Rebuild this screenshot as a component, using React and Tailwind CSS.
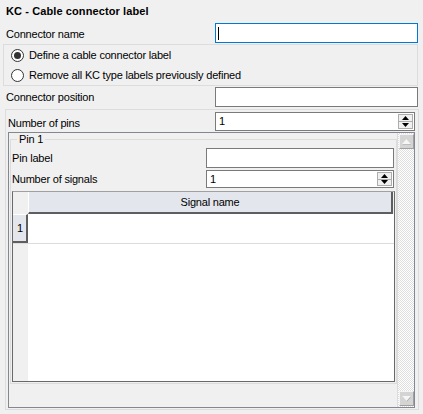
import React from 'react'

const font = "font-['Liberation_Sans',Arial,sans-serif]"

function TextBox({ focused, className = '' }) {
  return (
    <div
      className={`h-[20px] bg-white border flex items-center ${
        focused ? 'border-[#0078d7]' : 'border-[#7a7a7a]'
      } ${className}`}
    >
      {focused && <span className="ml-[2px] w-px h-[13px] bg-black" />}
    </div>
  )
}

function Spinner({ value, className = '' }) {
  return (
    <div className={`bg-white border border-[#7a7a7a] flex items-stretch ${className}`}>
      <span className="flex-1 flex items-center pl-[3px] leading-none">{value}</span>
      <div className="w-[15px] my-px mr-px flex flex-col border border-[#adadad] bg-[#f0f0f0]">
        <div className="flex-1 flex items-center justify-center border-b border-[#adadad]">
          <svg width="7" height="4" viewBox="0 0 7 4"><path d="M3.5 0 L7 4 L0 4 Z" fill="#000" /></svg>
        </div>
        <div className="flex-1 flex items-center justify-center">
          <svg width="7" height="4" viewBox="0 0 7 4"><path d="M0 0 L7 0 L3.5 4 Z" fill="#000" /></svg>
        </div>
      </div>
    </div>
  )
}

function Radio({ checked, label }) {
  return (
    <div className="h-[20px] flex items-center pl-[7px] gap-[5px]">
      <span className="w-[13px] h-[13px] rounded-full border border-[#333] bg-white flex items-center justify-center">
        {checked && <span className="w-[7px] h-[7px] rounded-full bg-[#333]" />}
      </span>
      <span>{label}</span>
    </div>
  )
}

function ScrollButton({ down }) {
  return (
    <div className="w-[15px] h-[15px] mx-px bg-[#d4d4d4] border border-t-[#f4f4f4] border-l-[#f4f4f4] border-r-[#a0a0a0] border-b-[#a0a0a0] flex items-center justify-center">
      <svg width="9" height="6" viewBox="0 0 9 6">
        {down ? (
          <>
            <path d="M0 0 L9 0 L4.5 5 Z" fill="#a8a8a8" transform="translate(0.5 0.5)" />
            <path d="M0 0 L9 0 L4.5 5 Z" fill="#f6f6f6" />
          </>
        ) : (
          <>
            <path d="M4.5 0 L9 5 L0 5 Z" fill="#a8a8a8" transform="translate(0.5 0.5)" />
            <path d="M4.5 0 L9 5 L0 5 Z" fill="#f6f6f6" />
          </>
        )}
      </svg>
    </div>
  )
}

export default function App() {
  return (
    <div className={`w-[423px] h-[414px] bg-[#f0f0f0] text-[11px] tracking-[-0.2px] text-black overflow-hidden flex flex-col ${font}`}>

      {/* Title */}
      <div className="h-[23px] pl-[6px] flex items-center font-bold tracking-[0.1px]">KC - Cable connector label</div>

      {/* Connector name */}
      <div className="h-[21px] flex items-start">
        <span className="flex-1 pl-[6px] pt-[3px]">Connector name</span>
        <TextBox focused className="w-[203px] mr-[5px]" />
      </div>

      {/* Radio group */}
      <div className="h-[42px] ml-[3px] mr-[5px] border border-[#dcdcdc] flex flex-col">
        <Radio checked label="Define a cable connector label" />
        <Radio label="Remove all KC type labels previously defined" />
      </div>

      {/* Connector position */}
      <div className="h-[21px] mt-px flex items-start">
        <span className="flex-1 pl-[6px] pt-[2px]">Connector position</span>
        <TextBox className="w-[203px] mr-[5px]" />
      </div>

      {/* Pins area */}
      <div className="mt-px ml-[5px] mr-[4px] h-[301px] border border-[#dcdcdc] flex flex-col">
        <div className="h-[22px] pt-[2px] flex items-start">
          <span className="flex-1 pl-[2px] pt-[3px]">Number of pins</span>
          <Spinner value="1" className="h-[19px] w-[200px] mr-[3px]" />
        </div>

        <div className="ml-[2px] mr-[3px] h-[276px] border border-[#828790] flex">
          {/* Scroll content */}
          <div className="flex-1 min-w-0 pl-px">
            <fieldset className="border border-[#dcdcdc] px-px pb-px">
              <legend className="ml-[5px] px-[2px] leading-[13px]">Pin 1</legend>

              <div className="mt-[2px] h-[20px] flex items-center">
                <span className="flex-1">Pin label</span>
                <TextBox className="w-[188px] mr-px" />
              </div>

              <div className="mt-[2px] flex items-center">
                <span className="flex-1">Number of signals</span>
                <Spinner value="1" className="h-[18px] w-[188px] mr-px" />
              </div>

              {/* Signals table */}
              <div className="mt-[3px] h-[191px] bg-white border border-t-[#a0a0a0] border-l-[#696969] border-b-[#696969] border-r-[#696969] flex flex-col">
                <div className="h-[22px] flex">
                  <div className="w-[15px] bg-[#f0f0f0]" />
                  <div className="flex-1 bg-[#e3e6ed] border-b-2 border-r-2 border-[#5e5e5e] border-l border-l-white flex items-center justify-center">
                    Signal name
                  </div>
                  <div className="w-px bg-[#f0f0f0]" />
                </div>
                <div className="h-[30px] flex border-b border-[#dcdcdc]">
                  <div className="w-[15px] bg-[#e3e6ed] border-r-2 border-b-2 border-[#5e5e5e] border-t border-t-white flex items-center pl-[4px]">
                    1
                  </div>
                  <div className="flex-1 bg-white" />
                </div>
                <div className="flex-1 flex">
                  <div className="w-[15px] bg-[#f0f0f0]" />
                  <div className="flex-1 bg-white" />
                </div>
              </div>
            </fieldset>
          </div>

          {/* Vertical scrollbar */}
          <div className="w-[17px] flex flex-col justify-between py-px border-l border-[#dcdcdc] bg-[repeating-conic-gradient(#dedede_0%_25%,#ffffff_0%_50%)] bg-[length:2px_2px]">
            <ScrollButton />
            <ScrollButton down />
          </div>
        </div>
      </div>
    </div>
  )
}
